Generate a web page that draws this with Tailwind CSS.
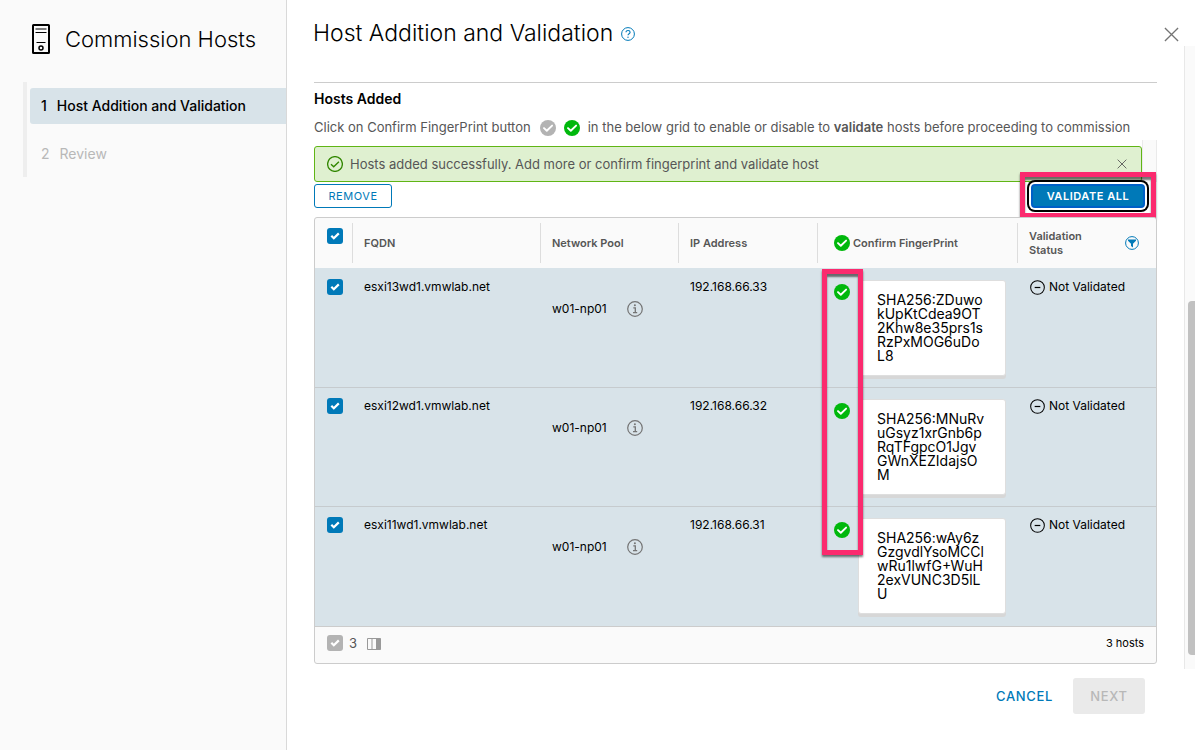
<!DOCTYPE html>
<html lang="en">
<head>
<meta charset="utf-8">
<meta name="viewport" content="width=device-width, initial-scale=1">
<title>Commission Hosts</title>
<script src="https://cdn.jsdelivr.net/npm/@tailwindcss/browser@4"></script>
</head>
<body class="bg-white font-['Inter','Liberation_Sans',sans-serif] text-[13px] leading-5 text-black">
<svg class="hidden" aria-hidden="true">
  <symbol id="tick" viewBox="0 0 16 16"><path d="M4.3 7.8l2.5 2.5 5-4.9" fill="none" stroke="#fff" stroke-width="2.2"/></symbol>
  <symbol id="ok" viewBox="0 0 16 16"><circle cx="8" cy="8" r="8" fill="currentColor"/><path d="M4 8.1l2.8 2.7 5.3-5.2" fill="none" stroke="#fff" stroke-width="1.9" stroke-linecap="round" stroke-linejoin="round"/></symbol>
  <symbol id="info" viewBox="0 0 16 16"><g fill="none" stroke="currentColor"><circle cx="8" cy="8" r="7.3" stroke-width="1.2"/><path d="M6.3 6.8h2v4.7M6 11.6h4.2" stroke-width="1.3"/></g><circle cx="7.9" cy="4.3" r="1" fill="currentColor"/></symbol>
  <symbol id="minus" viewBox="0 0 16 16"><g fill="none" stroke="currentColor"><circle cx="8" cy="8" r="7.3" stroke-width="1.1"/><path d="M5 8h6" stroke-width="1.3"/></g></symbol>
  <symbol id="cross" viewBox="0 0 16 16"><path d="M1 1l14 14M15 1L1 15" fill="none" stroke="currentColor" stroke-width="1.4"/></symbol>
</svg>

<div class="flex min-h-screen">
  <aside class="w-[287px] shrink-0 border-r border-[#d9d9d9] bg-[#fafafa]">
    <div class="flex items-center gap-[15px] pt-6 pl-8">
      <svg class="h-[30px] w-[18px]" viewBox="0 0 18 30" fill="none" stroke="#000"><rect x="1" y="1" width="16" height="28" rx="0.5" stroke-width="2"/><path d="M3.5 5h11M3.5 8.500h11M4.500 18.500h9" stroke-width="1.200"/><circle cx="9" cy="24" r="2" stroke-width="1.500"/></svg>
      <h1 class="text-[22px] leading-7 font-light">Commission Hosts</h1>
    </div>
    <nav class="mt-7 ml-[23px] border-l-4 border-[#eee] pt-[6px] pl-[3px]">
      <a href="#hosts" class="flex h-9 items-center gap-[10px] rounded-l-[3px] bg-[#d8e3e9] pl-[11px] text-sm font-medium" aria-current="step"><span>1</span><span>Host Addition and Validation</span></a>
      <a href="#review" class="mt-3 flex h-9 items-center gap-[10px] pl-[11px] text-sm text-[#b8b8b8]"><span>2</span><span>Review</span></a>
      <div class="h-[5px]"></div>
    </nav>
  </aside>

  <main class="flex min-w-0 flex-1 flex-col">
    <header class="flex h-[46px] items-start justify-between pt-[19px] pr-4 pl-[26px]">
      <div class="flex items-center gap-2">
        <h2 class="text-[23px] leading-7 font-light">Host Addition and Validation</h2>
        <button type="button" aria-label="Help" class="mt-[2px] text-[#0079b8]"><svg class="size-[14px]" viewBox="0 0 14 14" fill="none" stroke="currentColor"><circle cx="7" cy="7" r="6.400" stroke-width="1"/><path d="M5 5.300c0-2.500 4.100-2.300 4.100 0 0 1.400-2.100 1.500-2.100 3" stroke-width="1.100"/><circle cx="7" cy="10.200" r="0.400" stroke-width="0.700"/></svg></button>
      </div>
      <button type="button" aria-label="Close" class="mt-2 text-[#747474]"><svg class="size-[15px]"><use href="#cross"/></svg></button>
    </header>

    <div class="flex flex-1">
      <section id="hosts" class="min-w-0 flex-1 px-[27px] pt-9">
        <div class="border-t border-[#ccc] pt-[6px]">
          <h3 class="text-sm leading-5 font-semibold">Hosts Added</h3>
          <p class="mt-2 flex h-5 items-center whitespace-nowrap text-[#565656]">Click on Confirm FingerPrint button
            <svg class="mt-[2px] ml-[9px] size-4 shrink-0 text-[#b3b3b3]"><use href="#ok"/></svg>
            <svg class="mt-[2px] mr-2 ml-2 size-4 shrink-0 text-[#00b80c]"><use href="#ok"/></svg>
            <span>in the below grid to enable or disable to <b class="font-semibold">validate</b> hosts before proceeding to commission</span>
          </p>
        </div>

        <div class="mt-[3px] flex">
          <div role="alert" class="mt-[6px] flex h-9 flex-1 items-center rounded-[3px] border border-[#60b515] bg-[#dff0d0] pr-[14px] pl-3 text-[#565656]">
            <svg class="size-4 text-[#318700]" viewBox="0 0 16 16" fill="none" stroke="currentColor"><circle cx="8" cy="8" r="7.400" stroke-width="1.300"/><path d="M4 8.200l2.700 2.500 5.200-4.900" stroke-width="1.400"/></svg>
            <span class="ml-[7px] flex-1">Hosts added successfully. Add more or confirm fingerprint and validate host</span>
            <button type="button" aria-label="Dismiss"><svg class="size-[10px]"><use href="#cross"/></svg></button>
          </div>
          <div class="w-[15px] border-x border-[#eaeaea] bg-[#fafafa]"></div>
        </div>

        <div class="mt-[2px] flex justify-between pr-3">
          <button type="button" class="h-6 w-[78px] rounded-[3px] border border-[#0079b8] text-[11px] leading-4 tracking-wider text-[#0079b8]">REMOVE</button>
          <div class="relative">
            <button type="button" class="h-6 w-[114px] rounded-[4px] border-2 border-[#0060c8] bg-[#0079b8] text-[11px] leading-4 font-semibold tracking-wider text-white ring-2 ring-black ring-offset-2">VALIDATE ALL</button>
            <div class="pointer-events-none absolute -top-3 -right-[11px] h-[46px] w-[136px] border-[5px] border-[#fb2a6e] shadow-[0_2px_2px_#0008,inset_0_3px_2px_#0008]"></div>
          </div>
        </div>

        <div class="relative mt-[9px] rounded-[3px] border border-[#ccc] bg-[#fafafa]">
          <table class="w-full table-fixed border-collapse text-left">
            <colgroup><col class="w-[37px]"><col><col class="w-[138px]"><col class="w-[139px]"><col class="w-[200px]"><col class="w-[139px]"></colgroup>
            <thead>
              <tr class="h-[50px] text-[11px] leading-[14px] text-[#565656]">
                <th class="p-0 py-[5px]"><div class="h-10 pt-[5px] pl-3"><label class="grid size-4"><input type="checkbox" checked aria-label="Select all hosts" class="col-start-1 row-start-1 size-4 appearance-none rounded-[3px] bg-[#0079b8]"><svg class="pointer-events-none col-start-1 row-start-1 size-4"><use href="#tick"/></svg></label></div></th>
                <th class="p-0 py-[5px] font-semibold"><div class="flex h-10 items-center border-l border-[#ddd] pl-[11px]">FQDN</div></th>
                <th class="p-0 py-[5px] font-semibold"><div class="flex h-10 items-center border-l border-[#ddd] pl-[11px]">Network Pool</div></th>
                <th class="p-0 py-[5px] font-semibold"><div class="flex h-10 items-center border-l border-[#ddd] pl-[11px]">IP Address</div></th>
                <th class="p-0 py-[5px] font-semibold"><div class="flex h-10 items-center gap-[3px] border-l border-[#ddd] pl-4"><svg class="size-4 text-[#00b80c]"><use href="#ok"/></svg>Confirm FingerPrint</div></th>
                <th class="p-0 py-[5px] font-semibold"><div class="flex h-10 items-center justify-between border-l border-[#ddd] pr-[17px] pl-[11px]"><span>Validation<br>Status</span><button type="button" aria-label="Filter status" class="text-[#0079b8]"><svg class="size-[14px]" viewBox="0 0 14 14"><circle cx="7" cy="7" r="6.400" fill="none" stroke="currentColor"/><path d="M3 3.500h8v1.300L8 7.700v3.700L6 10V7.700L3 4.800z" fill="currentColor"/></svg></button></div></th>
              </tr>
            </thead>
            <tbody>
              <tr class="h-[119px] bg-[#d8e3e9] align-top">
                <td class="p-0 pt-[11px] pl-3"><label class="grid size-4"><input type="checkbox" checked aria-label="Select esxi13wd1.vmwlab.net" class="col-start-1 row-start-1 size-4 appearance-none rounded-[3px] bg-[#0079b8]"><svg class="pointer-events-none col-start-1 row-start-1 size-4"><use href="#tick"/></svg></label></td>
                <td class="p-0 pt-[9px] pl-3 text-xs leading-5">esxi13wd1.vmwlab.net</td>
                <td class="p-0 pt-[31px] pl-3 text-xs leading-5"><div class="flex items-center"><span class="w-[75px]">w01-np01</span><button type="button" aria-label="Pool details" class="text-[#747474]"><svg class="size-4"><use href="#info"/></svg></button></div></td>
                <td class="p-0 pt-[9px] pl-3 text-xs leading-5">192.168.66.33</td>
                <td class="p-0 pt-3 pl-[17px]"><div class="flex items-start gap-2"><button type="button" aria-label="Confirm fingerprint" class="mt-1 text-[#00b80c]"><svg class="size-4"><use href="#ok"/></svg></button><div class="h-[96px] w-[148px] rounded-[3px] border border-[#dedede] bg-white px-[18px] pt-3 text-sm leading-[14px] whitespace-nowrap shadow-[0_3px_0_#d7d7d7]">SHA256:ZDuwo<br>kUpKtCdea9OT<br>2Khw8e35prs1s<br>RzPxMOG6uDo<br>L8</div></div></td>
                <td class="p-0 pt-[9px] pl-[13px] text-xs leading-5"><div class="flex gap-1"><svg class="mt-[3px] size-[15px]"><use href="#minus"/></svg>Not Validated</div></td>
              </tr>
              <tr class="h-[119px] bg-[#d8e3e9] align-top shadow-[inset_0_1px_0_#c6cbce]">
                <td class="p-0 pt-[11px] pl-3"><label class="grid size-4"><input type="checkbox" checked aria-label="Select esxi12wd1.vmwlab.net" class="col-start-1 row-start-1 size-4 appearance-none rounded-[3px] bg-[#0079b8]"><svg class="pointer-events-none col-start-1 row-start-1 size-4"><use href="#tick"/></svg></label></td>
                <td class="p-0 pt-[9px] pl-3 text-xs leading-5">esxi12wd1.vmwlab.net</td>
                <td class="p-0 pt-[31px] pl-3 text-xs leading-5"><div class="flex items-center"><span class="w-[75px]">w01-np01</span><button type="button" aria-label="Pool details" class="text-[#747474]"><svg class="size-4"><use href="#info"/></svg></button></div></td>
                <td class="p-0 pt-[9px] pl-3 text-xs leading-5">192.168.66.32</td>
                <td class="p-0 pt-3 pl-[17px]"><div class="flex items-start gap-2"><button type="button" aria-label="Confirm fingerprint" class="mt-1 text-[#00b80c]"><svg class="size-4"><use href="#ok"/></svg></button><div class="h-[96px] w-[148px] rounded-[3px] border border-[#dedede] bg-white px-[18px] pt-3 text-sm leading-[14px] whitespace-nowrap shadow-[0_3px_0_#d7d7d7]">SHA256:MNuRv<br>uGsyz1xrGnb6p<br>RqTFgpcO1Jgv<br>GWnXEZIdajsO<br>M</div></div></td>
                <td class="p-0 pt-[9px] pl-[13px] text-xs leading-5"><div class="flex gap-1"><svg class="mt-[3px] size-[15px]"><use href="#minus"/></svg>Not Validated</div></td>
              </tr>
              <tr class="h-[120px] bg-[#d8e3e9] align-top shadow-[inset_0_1px_0_#c6cbce]">
                <td class="p-0 pt-[11px] pl-3"><label class="grid size-4"><input type="checkbox" checked aria-label="Select esxi11wd1.vmwlab.net" class="col-start-1 row-start-1 size-4 appearance-none rounded-[3px] bg-[#0079b8]"><svg class="pointer-events-none col-start-1 row-start-1 size-4"><use href="#tick"/></svg></label></td>
                <td class="p-0 pt-[9px] pl-3 text-xs leading-5">esxi11wd1.vmwlab.net</td>
                <td class="p-0 pt-[31px] pl-3 text-xs leading-5"><div class="flex items-center"><span class="w-[75px]">w01-np01</span><button type="button" aria-label="Pool details" class="text-[#747474]"><svg class="size-4"><use href="#info"/></svg></button></div></td>
                <td class="p-0 pt-[9px] pl-3 text-xs leading-5">192.168.66.31</td>
                <td class="p-0 pt-3 pl-[17px]"><div class="flex items-start gap-2"><button type="button" aria-label="Confirm fingerprint" class="mt-1 text-[#00b80c]"><svg class="size-4"><use href="#ok"/></svg></button><div class="h-[96px] w-[148px] rounded-[3px] border border-[#dedede] bg-white px-[18px] pt-3 text-sm leading-[14px] whitespace-nowrap shadow-[0_3px_0_#d7d7d7]">SHA256:wAy6z<br>GzgvdlYsoMCCl<br>wRu1lwfG+WuH<br>2exVUNC3D5lL<br>U</div></div></td>
                <td class="p-0 pt-[9px] pl-[13px] text-xs leading-5"><div class="flex gap-1"><svg class="mt-[3px] size-[15px]"><use href="#minus"/></svg>Not Validated</div></td>
              </tr>
            </tbody>
          </table>
          <div class="flex h-[37px] items-center border-t border-[#ccc] px-3 pb-1 text-[#565656]">
            <label class="flex items-center gap-[6px]"><span class="grid size-4"><input type="checkbox" checked disabled class="col-start-1 row-start-1 size-4 appearance-none rounded-[3px] bg-[#b3b3b3]"><svg class="pointer-events-none col-start-1 row-start-1 size-4"><use href="#tick"/></svg></span>3</label>
            <button type="button" aria-label="Show columns" class="ml-[10px]"><svg class="mt-[2px] h-3 w-[14px]" viewBox="0 0 14 12"><path d="M9.500 0.500h4v11h-4z" fill="#999"/><path d="M0.500 0.500h13v11H0.500zM5 0.500v11M9.500 0.500v11" fill="none" stroke="#999"/></svg></button>
            <span class="ml-auto text-[11px] text-black">3 hosts</span>
          </div>
          <div class="pointer-events-none absolute top-[51px] right-[293px] h-[286px] w-[41px] border-[5px] border-[#fb2a6e] shadow-[0_2px_2px_#0008,inset_0_3px_2px_#0008]"></div>
        </div>
      </section>
      <div class="w-[11px] shrink-0 border-l border-[#e8e8e8] bg-[#fafafa] pt-[255px] pl-[3px]"><div class="h-[354px] rounded-l-[4px] bg-[#c1c1c1]"></div></div>
    </div>

    <footer class="flex h-[81px] items-start justify-end gap-[20px] pt-[9px] pr-[50px]">
      <button type="button" class="h-9 text-[13px] font-medium tracking-wider text-[#0079b8]">CANCEL</button>
      <button type="button" disabled class="h-9 w-[72px] rounded-[3px] bg-[#eaeaea] text-[13px] font-medium tracking-wider text-[#b8b8b8]">NEXT</button>
    </footer>
  </main>
</div>
</body>
</html>
